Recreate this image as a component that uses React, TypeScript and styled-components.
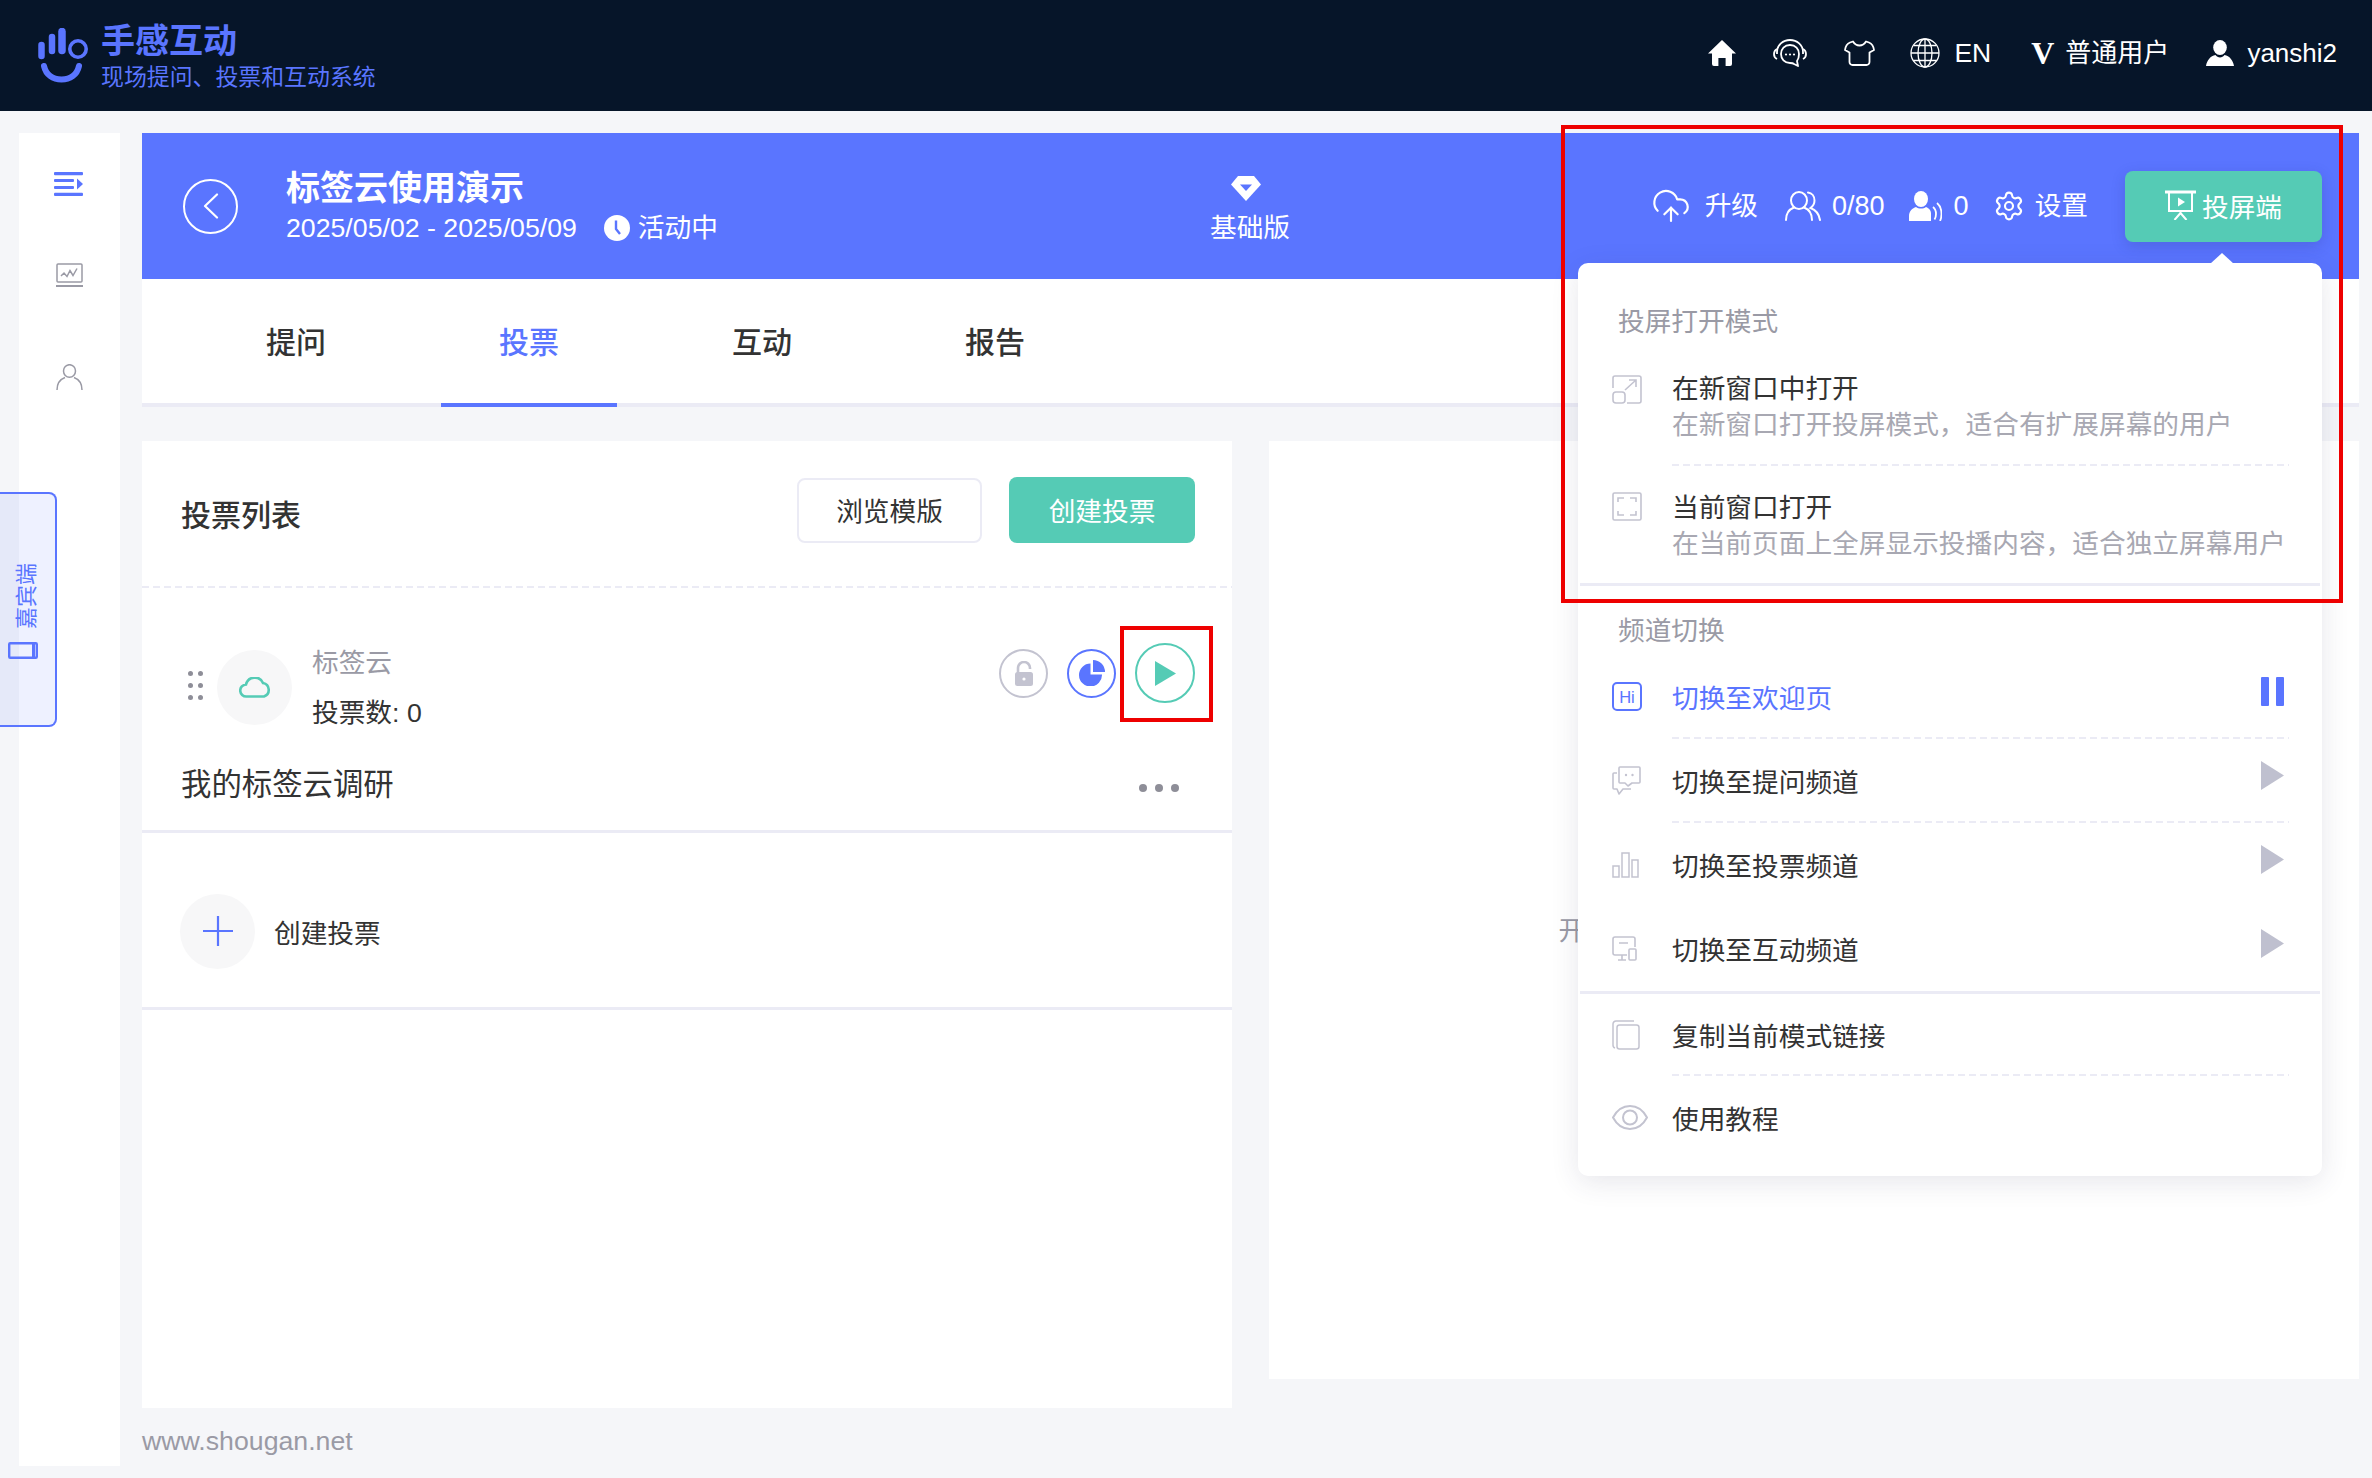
import React from "react";
import styled, { createGlobalStyle, css } from "styled-components";
import { CloudUpload, Settings } from "lucide-react";

const BLUE = "#5a75ff";
const TEAL = "#55cbb5";
const LINE = "#ebebf5";
const MUTED = "#9a9aa5";
const ICON = "#c3c3d0";
const INK = "#333333";
const FONT = `"Liberation Sans", "Noto Sans CJK SC", sans-serif`;
const BODY_SIZE = "26.7px";

const dashedBottom = css`
  background-image: linear-gradient(to right, ${LINE} 7px, transparent 7px);
  background-size: 11px 2px;
  background-position: left bottom;
  background-repeat: repeat-x;
`;

const Global = createGlobalStyle`
  html, body { margin: 0; padding: 0; background: #f5f6f9; }
  body { font-family: ${FONT}; color: ${INK}; }
  * { box-sizing: border-box; }
`;

const Page = styled.div`
  position: relative;
  width: 2372px;
  height: 1478px;
  overflow: hidden;
  background: #f5f6f9;
  display: flex;
  flex-direction: column;
`;

/* top bar */
const TopBar = styled.header`
  height: 111px;
  flex: none;
  background: #061529;
  display: flex;
  align-items: center;
  justify-content: space-between;
  padding: 0 35px 0 38px;
  color: #fff;
`;
const Brand = styled.div`
  display: flex;
  align-items: center;
  gap: 13px;
  color: ${BLUE};
`;
const BrandText = styled.div`
  display: flex;
  flex-direction: column;
  margin-top: -1px;
`;
const BrandName = styled.div`
  font-size: 34px;
  line-height: 44px;
  font-weight: 700;
`;
const BrandSub = styled.div`
  font-size: 22.9px;
  line-height: 29px;
`;
const TopNav = styled.nav`
  display: flex;
  align-items: center;
  gap: 37px;
  margin-top: -5px;
`;
const TopItem = styled.div<{ $gap?: number; $ml?: number; $size?: number }>`
  display: flex;
  align-items: center;
  gap: ${(p) => p.$gap ?? 14}px;
  font-size: ${(p) => p.$size ?? 26}px;
  line-height: 36px;
  margin-left: ${(p) => p.$ml ?? 0}px;
`;
const VMark = styled.span`
  font-family: "Liberation Serif", serif;
  font-weight: 700;
  font-size: 32px;
  line-height: 36px;
`;

/* shell */
const Shell = styled.div`
  flex: 1;
  min-height: 0;
  display: flex;
  gap: 22px;
  padding: 22px 13px 0 19px;
`;
const Rail = styled.aside`
  flex: none;
  width: 101px;
  height: 1333px;
  background: #fff;
  display: flex;
  flex-direction: column;
  align-items: center;
  padding: 39px 0 0 0;
`;
const RailSlot = styled.div<{ $gap: number; $nudge?: number }>`
  display: flex;
  margin-bottom: ${(p) => p.$gap}px;
  margin-right: ${(p) => p.$nudge ?? 0}px;
`;
const Content = styled.main`
  flex: 1;
  min-width: 0;
  display: flex;
  flex-direction: column;
`;

/* banner */
const Banner = styled.section`
  flex: none;
  height: 146px;
  background: ${BLUE};
  color: #fff;
  display: flex;
  align-items: center;
  padding: 0 37px 0 41px;
`;
const BannerSide = styled.div<{ $end?: boolean }>`
  flex: 1 1 0;
  display: flex;
  align-items: center;
  justify-content: ${(p) => (p.$end ? "flex-end" : "flex-start")};
  gap: ${(p) => (p.$end ? 24 : 48)}px;
`;
const BackButton = styled.div`
  width: 55px;
  height: 55px;
  flex: none;
  border: 2.5px solid #fff;
  border-radius: 50%;
  display: flex;
  align-items: center;
  justify-content: center;
`;
const EventInfo = styled.div`
  display: flex;
  flex-direction: column;
  margin-top: -2px;
`;
const EventTitle = styled.h1`
  margin: 0;
  font-size: 34px;
  line-height: 46px;
  font-weight: 700;
`;
const EventMeta = styled.div`
  display: flex;
  align-items: center;
  font-size: ${BODY_SIZE};
  line-height: 34px;
`;
const EventDates = styled.span`
  margin-right: 27px;
`;
const EventStatus = styled.span`
  display: flex;
  align-items: center;
  gap: 8px;
`;
const Plan = styled.div`
  flex: none;
  display: flex;
  flex-direction: column;
  align-items: center;
  gap: 10px;
  margin: 8px 5px 0 0;
  font-size: ${BODY_SIZE};
  line-height: 34px;
`;
const PlanMark = styled.span`
  display: flex;
  margin-right: 9px;
`;
const BannerAction = styled.div<{ $gap?: number; $size?: number; $after?: number }>`
  display: flex;
  align-items: center;
  gap: ${(p) => p.$gap ?? 11}px;
  font-size: ${(p) => p.$size ?? 26.7}px;
  line-height: 36px;
  margin-right: ${(p) => p.$after ?? 0}px;
`;
const ScreenWrap = styled.div`
  position: relative;
  margin-left: 13px;
`;
const ScreenButton = styled.div`
  width: 197px;
  height: 71px;
  background: ${TEAL};
  border-radius: 8px;
  box-shadow: 0 4px 14px rgba(40, 50, 130, 0.22);
  display: flex;
  align-items: center;
  justify-content: center;
  gap: 6px;
  font-size: ${BODY_SIZE};
  padding-bottom: 2px;
`;

/* popover */
const Popover = styled.div`
  position: absolute;
  z-index: 5;
  top: calc(100% + 21px);
  right: 0;
  width: 744px;
  height: 913px;
  background: #fff;
  border-radius: 10px;
  box-shadow: 0 6px 28px rgba(50, 50, 93, 0.12);
  color: ${INK};
  padding-top: 41px;
  &::before {
    content: "";
    position: absolute;
    top: -10px;
    right: 88px;
    width: 0;
    height: 0;
    border-left: 12px solid transparent;
    border-right: 12px solid transparent;
    border-bottom: 11px solid #fff;
  }
`;
const PopHeading = styled.div<{ $after: number }>`
  padding-left: 40px;
  font-size: ${BODY_SIZE};
  line-height: 36px;
  color: ${MUTED};
  margin-bottom: ${(p) => p.$after}px;
`;
const ModeRow = styled.div`
  display: flex;
  padding: 0 33px 0 34px;
`;
const IconCol = styled.div<{ $top?: number }>`
  flex: none;
  width: 60px;
  display: flex;
  align-items: ${(p) => (p.$top !== undefined ? "flex-start" : "center")};
  padding-top: ${(p) => p.$top ?? 0}px;
`;
const ModeBody = styled.div<{ $dashed?: boolean; $pt: number; $pb: number }>`
  flex: 1;
  padding: ${(p) => p.$pt}px 0 ${(p) => p.$pb}px;
  ${(p) => p.$dashed && dashedBottom}
`;
const ItemTitle = styled.div`
  font-size: ${BODY_SIZE};
  line-height: 36px;
`;
const ItemDesc = styled.div`
  font-size: ${BODY_SIZE};
  line-height: 36px;
  color: #a8a8b2;
  white-space: nowrap;
`;
const PopDivider = styled.div<{ $after: number }>`
  height: 3px;
  margin: 0 2px ${(p) => p.$after}px;
  background: ${LINE};
`;
const ChannelRow = styled.div<{ $h: number }>`
  height: ${(p) => p.$h}px;
  display: flex;
  padding: 0 33px 0 34px;
`;
const ChannelBody = styled.div<{ $dashed?: boolean; $active?: boolean }>`
  flex: 1;
  display: flex;
  align-items: center;
  justify-content: space-between;
  font-size: ${BODY_SIZE};
  color: ${(p) => (p.$active ? BLUE : INK)};
  padding-right: 5px;
  ${(p) => p.$dashed && dashedBottom}
`;
const StateMark = styled.span`
  display: flex;
  margin-bottom: 10px;
`;

/* tabs */
const Tabs = styled.nav`
  flex: none;
  height: 128px;
  background: #fff;
  border-bottom: 4px solid ${LINE};
  display: flex;
  gap: 57px;
  padding-left: 66px;
`;
const Tab = styled.div<{ $active?: boolean }>`
  width: 176px;
  height: 128px;
  display: flex;
  align-items: center;
  justify-content: center;
  font-size: 30px;
  font-weight: 500;
  padding-bottom: 2px;
  color: ${(p) => (p.$active ? BLUE : INK)};
  border-bottom: 4px solid ${(p) => (p.$active ? BLUE : "transparent")};
`;

/* panels */
const Panels = styled.div`
  flex: 1;
  display: flex;
  gap: 37px;
  margin-top: 34px;
  align-items: flex-start;
`;
const ListColumn = styled.div`
  flex: none;
  width: 1090px;
  display: flex;
  flex-direction: column;
`;
const ListPanel = styled.section`
  height: 967px;
  background: #fff;
`;
const ListHead = styled.div`
  height: 147px;
  display: flex;
  align-items: center;
  justify-content: space-between;
  padding: 0 37px 0 39px;
  ${dashedBottom}
`;
const ListTitle = styled.h2`
  margin: -3px 0 0;
  font-size: 30px;
  font-weight: 500;
`;
const ListActions = styled.div`
  display: flex;
  align-items: center;
  gap: 27px;
  margin-bottom: 9px;
`;
const HeadButton = styled.div<{ $primary?: boolean }>`
  width: ${(p) => (p.$primary ? 186 : 185)}px;
  height: ${(p) => (p.$primary ? 66 : 65)}px;
  display: flex;
  align-items: center;
  justify-content: center;
  font-size: ${BODY_SIZE};
  padding-bottom: 2px;
  border-radius: 8px;
  background: ${(p) => (p.$primary ? TEAL : "#fff")};
  color: ${(p) => (p.$primary ? "#fff" : INK)};
  border: ${(p) => (p.$primary ? "none" : `2px solid ${LINE}`)};
`;
const PollItem = styled.div`
  height: 245px;
  border-bottom: 3px solid ${LINE};
  padding: 0 0 0 39px;
  position: relative;
  display: flex;
  flex-direction: column;
`;
const PollTop = styled.div`
  display: flex;
  align-items: center;
  height: 136px;
  padding: 0 37px 0 0;
  margin-top: 31px;
`;
const GripDots = styled.div`
  display: grid;
  grid-template-columns: 5px 5px;
  gap: 7px 5px;
  margin: -4px 14px 0 7px;
  & > i {
    width: 5px;
    height: 5px;
    border-radius: 50%;
    background: #8e8e98;
  }
`;
const SoftCircle = styled.div`
  width: 75px;
  height: 75px;
  flex: none;
  border-radius: 50%;
  background: #f7f7f8;
  display: flex;
  align-items: center;
  justify-content: center;
`;
const PollMeta = styled.div`
  margin: 2px 0 0 20px;
  display: flex;
  flex-direction: column;
  gap: 14px;
  font-size: ${BODY_SIZE};
  line-height: 36px;
`;
const PollKind = styled.div`
  color: ${MUTED};
`;
const PollIcons = styled.div`
  margin: 0 0 28px auto;
  display: flex;
  align-items: center;
  gap: 19px;
`;
const RoundIcon = styled.div<{ $size: number; $color: string }>`
  width: ${(p) => p.$size}px;
  height: ${(p) => p.$size}px;
  border: 2px solid ${(p) => p.$color};
  border-radius: 50%;
  display: flex;
  align-items: center;
  justify-content: center;
`;
const PollBottom = styled.div`
  display: flex;
  align-items: center;
  justify-content: space-between;
  padding-right: 53px;
  margin-top: 8px;
  font-size: 30.4px;
  line-height: 42px;
`;
const MoreDots = styled.div`
  display: flex;
  gap: 8px;
  margin-top: 8px;
  & > i {
    width: 8px;
    height: 8px;
    border-radius: 50%;
    background: #8e8e98;
  }
`;
const CreateRow = styled.div`
  height: 177px;
  border-bottom: 3px solid ${LINE};
  padding: 22px 0 0 38px;
  display: flex;
  align-items: center;
  gap: 19px;
  font-size: ${BODY_SIZE};
`;
const Footer = styled.div`
  font-size: ${BODY_SIZE};
  line-height: 36px;
  margin-top: 15px;
  color: ${MUTED};
`;
const ResultPanel = styled.section`
  flex: 1;
  height: 938px;
  background: #fff;
  display: flex;
  align-items: center;
  justify-content: center;
  font-size: 26px;
  color: ${MUTED};
  overflow: hidden;
  white-space: nowrap;
  padding: 36px 0 0 9px;
`;

/* overlays */
const GuestTab = styled.div`
  position: absolute;
  left: 0;
  top: 492px;
  width: 57px;
  height: 235px;
  background: rgba(90, 117, 255, 0.1);
  border: 2px solid ${BLUE};
  border-left: none;
  border-radius: 0 8px 8px 0;
  display: flex;
  flex-direction: column;
  align-items: center;
  justify-content: center;
  gap: 12px;
  padding-top: 3px;
  color: ${BLUE};
`;
const GuestLabel = styled.span`
  writing-mode: vertical-rl;
  text-orientation: sideways;
  transform: rotate(180deg);
  font-size: 22px;
  line-height: 24px;
  margin-right: 2px;
`;
const GuestIconSlot = styled.span`
  display: flex;
  margin-right: 9px;
`;
const RedFrame = styled.div<{ $l: number; $t: number; $w: number; $h: number }>`
  position: absolute;
  z-index: 9;
  left: ${(p) => p.$l}px;
  top: ${(p) => p.$t}px;
  width: ${(p) => p.$w}px;
  height: ${(p) => p.$h}px;
  border: 4px solid #ee0000;
  pointer-events: none;
`;

const Glyph = styled.svg`
  display: block;
  flex: none;
`;

type IP = { c?: string };

const Logo = () => (
  <Glyph width="50" height="56" viewBox="0 0 50 56" fill="none" stroke={BLUE} strokeLinecap="round">
    <path d="M3.500 17v11" strokeWidth="6.500" />
    <path d="M14 9v14" strokeWidth="6.500" />
    <path d="M24 3.500v19" strokeWidth="7.500" />
    <circle cx="40" cy="21" r="8.200" strokeWidth="3.600" />
    <path d="M6 38c2 9 9 13.500 17.500 13.500S39 47 41 38" strokeWidth="6" />
  </Glyph>
);

const HomeIcon = () => (
  <Glyph width="28" height="26" viewBox="0 0 28 26" fill="#fff">
    <path d="M14 0 28 13.600h-4V24a2 2 0 0 1-2 2h-4.400v-8h-7.200v8H6a2 2 0 0 1-2-2V13.600H0z" />
  </Glyph>
);
const HeadsetIcon = () => (
  <Glyph width="34" height="28" viewBox="0 0 34 28" fill="none" stroke="#fff" strokeWidth="1.800" strokeLinejoin="round">
    <path d="M4 15v-2C4 6 10 1 17 1s13 5 13 12v2" />
    <path d="M4 10c-2 1-3 3-3 5s1 4 3 5M30 10c2 1 3 3 3 5s-1 4-3 5" />
    <path d="M17 6C11.500 6 8 10 8 15s3.500 9 9 9c1.500 0 3 0 4 1l4 2-1-5c1.500-2 2-4 2-7 0-5-3.500-9-9-9z" />
    <circle cx="13" cy="15.500" r="1.100" fill="#fff" stroke="none" />
    <circle cx="17" cy="15.500" r="1.100" fill="#fff" stroke="none" />
    <circle cx="21" cy="15.500" r="1.100" fill="#fff" stroke="none" />
  </Glyph>
);
const ShirtIcon = () => (
  <Glyph width="31" height="26" viewBox="0 0 31 26" fill="none" stroke="#fff" strokeWidth="1.800" strokeLinejoin="round">
    <path d="M9 1.500c1.500 2.500 4 4 6.500 4s5-1.500 6.500-4l3 1c2.500 1 4.500 3.500 5 7.500l-4.500 2.500V22a3 3 0 0 1-3 3h-14a3 3 0 0 1-3-3v-9.500L1 10c.5-4 2.500-6.500 5-7.500z" />
  </Glyph>
);
const GlobeIcon = () => (
  <Glyph width="30" height="30" viewBox="0 0 30 30" fill="none" stroke="#fff" strokeWidth="1.300">
    <circle cx="15" cy="15" r="14" />
    <ellipse cx="15" cy="15" rx="7" ry="14" />
    <path d="M15 1v28M1 15h28M3.500 7.500h23M3.500 22.500h23" />
  </Glyph>
);
const PersonSolid = () => (
  <Glyph width="28" height="26" viewBox="0 0 28 26" fill="#fff">
    <ellipse cx="14" cy="7.500" rx="6.800" ry="7.500" />
    <path d="M9.500 15c1 1.500 2.800 2.500 4.500 2.500s3.500-1 4.500-2.500c5 1 8.500 5 9.500 11H0c1-6 4.500-10 9.500-11z" />
  </Glyph>
);
const BackChevron = () => (
  <Glyph width="16" height="26" viewBox="0 0 16 26" fill="none" stroke="#fff" strokeWidth="2.200" strokeLinecap="round" strokeLinejoin="round">
    <path d="M14 1.500 2 13l12 11.500" />
  </Glyph>
);
const ClockIcon = () => (
  <Glyph width="26" height="26" viewBox="0 0 26 26">
    <circle cx="13" cy="13" r="13" fill="#fff" />
    <path d="M12 5.500V14l4 5" fill="none" stroke={BLUE} strokeWidth="2.400" strokeLinejoin="round" />
  </Glyph>
);
const DiamondIcon = () => (
  <Glyph width="30" height="25" viewBox="0 0 30 25" fill="#fff">
    <path d="M7 0h16l7 8.500L15 25 0 8.500z" />
    <path d="M9 8.500h12L15 15z" fill={BLUE} />
  </Glyph>
);
const UsersOutline = () => (
  <Glyph width="36" height="30" viewBox="0 0 36 30" fill="none" stroke="#fff" strokeWidth="2" strokeLinecap="round">
    <ellipse cx="14" cy="9.500" rx="8" ry="8.500" />
    <path d="M1 29c0-7 4-11 8-12.500M27 29c0-7-4-11-8-12.500" />
    <path d="M23 1.500c4 .5 6.500 4 6.500 8s-2 6-4 7.500c4 1.500 8.500 5 9.500 12" />
  </Glyph>
);
const PersonWave = () => (
  <Glyph width="33" height="30" viewBox="0 0 33 30" fill="#fff">
    <ellipse cx="12" cy="8" rx="7" ry="8" />
    <path d="M0 30v-5c0-5 3.500-8 7-9 1.500 1 3 1.500 5 1.500s3.500-.5 5-1.500c1.500.5 3 1.500 4 3 .5 1 1 2 1 3v8a1 1 0 0 1-1 0z" />
    <path d="M24 16c2 1.500 3 4 3 7 0 2-.5 4-1.500 5.500M28 12c3 2.500 4.500 6.500 4.500 11 0 2.500-.5 5-1.500 7" fill="none" stroke="#fff" strokeWidth="1.800" />
  </Glyph>
);
const PresentIcon = () => (
  <Glyph width="31" height="30" viewBox="0 0 31 30" fill="none" stroke="#fff" strokeWidth="2">
    <path d="M0 2h31" strokeWidth="3" />
    <path d="M4 2v19h23V2" />
    <path d="M13 7.500v9l7-4.500z" fill="#fff" stroke="none" />
    <path d="M15.500 21v3M15.500 23l-6 7M15.500 23l6 7" />
  </Glyph>
);

const MenuIcon = () => (
  <Glyph width="29" height="24" viewBox="0 0 29 24" fill={BLUE}>
    <rect y="0" width="29" height="3.200" rx="1" />
    <rect y="7" width="20" height="3" rx="1" />
    <rect y="14" width="20" height="3" rx="1" />
    <rect y="20.800" width="29" height="3.200" rx="1" />
    <path d="M23 6.500 29 12l-6 5.500z" />
  </Glyph>
);
const ChartPad = () => (
  <Glyph width="27" height="24" viewBox="0 0 27 24" fill="none" stroke={MUTED} strokeWidth="1.500">
    <rect x="1" y="1" width="25" height="18" rx="1" />
    <path d="M5 13l3-3 3 3.500 3-6 3 5 4-7" />
    <path d="M0 23h27" strokeWidth="2" />
  </Glyph>
);
const PersonOutline = () => (
  <Glyph width="27" height="26" viewBox="0 0 27 26" fill="none" stroke={MUTED} strokeWidth="1.500">
    <ellipse cx="13.500" cy="7" rx="6" ry="6.300" />
    <path d="M1 26c0-7 4-11 8-12.500M26 26c0-7-4-11-8-12.500" />
  </Glyph>
);
const TabletIcon = () => (
  <Glyph width="30" height="17" viewBox="0 0 30 17" fill="none" stroke={BLUE} strokeWidth="2.400">
    <rect x="1.200" y="1.200" width="27.600" height="14.600" rx="1" />
    <path d="M25.500 1v15" strokeWidth="3" />
  </Glyph>
);

const CloudOutline = () => (
  <Glyph width="32" height="21" viewBox="0 0 32 21" fill="none" stroke={TEAL} strokeWidth="2.600">
    <path d="M9 19.500H7.500a6 6 0 0 1-.5-12 9 9 0 0 1 17-1.500 7 7 0 0 1 1 13.500z" />
  </Glyph>
);
const PlusIcon = () => (
  <Glyph width="30" height="30" viewBox="0 0 30 30" fill="none" stroke={BLUE} strokeWidth="2.200">
    <path d="M15 0v30M0 15h30" />
  </Glyph>
);
const LockIcon = () => (
  <Glyph width="20" height="25" viewBox="0 0 20 25">
    <path d="M4 12V7a6 6 0 0 1 12 0v1" fill="none" stroke={ICON} strokeWidth="2.600" />
    <rect x="1" y="11" width="18" height="14" rx="2.500" fill={ICON} />
    <circle cx="10" cy="18" r="1.600" fill="#fff" />
  </Glyph>
);
const PieIcon = () => (
  <Glyph width="26" height="26" viewBox="0 0 26 26" fill={BLUE}>
    <path d="M11.500 3.500V14.500H23A11.500 11.500 0 1 1 11.500 3.500z" />
    <path d="M14 0a12 12 0 0 1 12 12H14z" />
  </Glyph>
);
const PlayIcon = () => (
  <Glyph width="21" height="25" viewBox="0 0 21 25" fill={TEAL}>
    <path d="M0 0 21 12.500 0 25z" />
  </Glyph>
);

const OpenNew = ({ c = ICON }: IP) => (
  <Glyph width="30" height="29" viewBox="0 0 30 29" fill="none" stroke={c} strokeWidth="1.600">
    <path d="M1 13V3a2 2 0 0 1 2-2h24a2 2 0 0 1 2 2v23a2 2 0 0 1-2 2H15" />
    <rect x="1" y="17" width="12" height="11" rx="3" />
    <path d="M13 15 24 5M17 5h7v7" />
  </Glyph>
);
const FullIcon = ({ c = ICON }: IP) => (
  <Glyph width="30" height="29" viewBox="0 0 30 29" fill="none" stroke={c} strokeWidth="1.600">
    <rect x="1" y="1" width="28" height="27" rx="1.500" />
    <path d="M6 10V6h6M18 6h6v4M6 19v4h6M18 23h6v-4" />
  </Glyph>
);
const HiIcon = () => (
  <Glyph width="30" height="29" viewBox="0 0 30 29" fill="none" stroke={BLUE} strokeWidth="2">
    <rect x="1" y="1" width="28" height="27" rx="4" />
    <text x="15" y="20.500" textAnchor="middle" fontFamily="Liberation Sans, sans-serif" fontSize="16.500" fill={BLUE} stroke="none">
      Hi
    </text>
  </Glyph>
);
const ChatIcon = ({ c = ICON }: IP) => (
  <Glyph width="29" height="29" viewBox="0 0 29 29" fill="none" stroke={c} strokeWidth="1.600" strokeLinejoin="round">
    <path d="M8 1h19a1 1 0 0 1 1 1v14a1 1 0 0 1-1 1h-7l-4 3-3-3H8a1 1 0 0 1-1-1V2a1 1 0 0 1 1-1z" />
    <path d="M5 7H2a1 1 0 0 0-1 1v14a1 1 0 0 0 1 1h3l2 5 4-5h8" />
    <circle cx="14" cy="9" r="1.200" fill={c} stroke="none" />
    <circle cx="20.500" cy="9" r="1.200" fill={c} stroke="none" />
  </Glyph>
);
const BarsIcon = ({ c = ICON }: IP) => (
  <Glyph width="27" height="26" viewBox="0 0 27 26" fill="none" stroke={c} strokeWidth="1.500">
    <rect x="1" y="14" width="6" height="11" />
    <rect x="10" y="1" width="7" height="24" />
    <rect x="20" y="8" width="6" height="17" />
  </Glyph>
);
const DeviceIcon = ({ c = ICON }: IP) => (
  <Glyph width="25" height="25" viewBox="0 0 25 25" fill="none" stroke={c} strokeWidth="1.600">
    <path d="M15 19H3a2 2 0 0 1-2-2V3a2 2 0 0 1 2-2h18a2 2 0 0 1 2 2v8" />
    <path d="M7 7h9M6 24h8M10 19v5" />
    <rect x="17" y="13" width="7" height="11" rx="1" />
  </Glyph>
);
const CopyIcon = ({ c = ICON }: IP) => (
  <Glyph width="28" height="30" viewBox="0 0 28 30" fill="none" stroke={c} strokeWidth="1.500">
    <path d="M22 1H4a3 3 0 0 0-3 3v21a3 3 0 0 0 2 3" />
    <rect x="5" y="5" width="22" height="24" rx="2.500" />
  </Glyph>
);
const EyeIcon = ({ c = ICON }: IP) => (
  <Glyph width="36" height="25" viewBox="0 0 36 25" fill="none" stroke={c} strokeWidth="2">
    <path d="M1 12.500C5 5 11 1 18 1s13 4 17 11.500C31 20 25 24 18 24S5 20 1 12.500z" />
    <ellipse cx="18" cy="12.500" rx="7" ry="7" />
  </Glyph>
);
const PauseMark = () => (
  <Glyph width="23" height="29" viewBox="0 0 23 29" fill={BLUE}>
    <rect width="8" height="29" rx="1" />
    <rect x="15" width="8" height="29" rx="1" />
  </Glyph>
);
const PlayMark = () => (
  <Glyph width="23" height="29" viewBox="0 0 23 29" fill="#bfc0cf">
    <path d="M0 0 23 14.500 0 29z" />
  </Glyph>
);

const channels = [
  { label: "切换至欢迎页", icon: <HiIcon />, active: true, dashed: true },
  { label: "切换至提问频道", icon: <ChatIcon />, dashed: true },
  { label: "切换至投票频道", icon: <BarsIcon /> },
  { label: "切换至互动频道", icon: <DeviceIcon /> },
];

export default function App() {
  return (
    <Page>
      <Global />
      <TopBar>
        <Brand>
          <Logo />
          <BrandText>
            <BrandName>手感互动</BrandName>
            <BrandSub>现场提问、投票和互动系统</BrandSub>
          </BrandText>
        </Brand>
        <TopNav>
          <HomeIcon />
          <HeadsetIcon />
          <ShirtIcon />
          <TopItem $ml={-2} $size={26.500}>
            <GlobeIcon />
            <span>EN</span>
          </TopItem>
          <TopItem $gap={11} $ml={3}>
            <VMark>V</VMark>
            <span>普通用户</span>
          </TopItem>
          <TopItem $gap={13}>
            <PersonSolid />
            <span>yanshi2</span>
          </TopItem>
        </TopNav>
      </TopBar>

      <Shell>
        <Rail>
          <RailSlot $gap={67} $nudge={3}>
            <MenuIcon />
          </RailSlot>
          <RailSlot $gap={77}>
            <ChartPad />
          </RailSlot>
          <RailSlot $gap={0}>
            <PersonOutline />
          </RailSlot>
        </Rail>

        <Content>
          <Banner>
            <BannerSide>
              <BackButton>
                <BackChevron />
              </BackButton>
              <EventInfo>
                <EventTitle>标签云使用演示</EventTitle>
                <EventMeta>
                  <EventDates>2025/05/02 - 2025/05/09</EventDates>
                  <EventStatus>
                    <ClockIcon />
                    活动中
                  </EventStatus>
                </EventMeta>
              </EventInfo>
            </BannerSide>
            <Plan>
              <PlanMark>
                <DiamondIcon />
              </PlanMark>
              基础版
            </Plan>
            <BannerSide $end>
              <BannerAction $gap={14} $after={3}>
                <CloudUpload size={40} strokeWidth={1.3} color="#fff" />
                升级
              </BannerAction>
              <BannerAction $size={27}>
                <UsersOutline />
                0/80
              </BannerAction>
              <BannerAction $gap={12} $size={27}>
                <PersonWave />0
              </BannerAction>
              <BannerAction $gap={10}>
                <Settings size={32} strokeWidth={1.6} color="#fff" />
                设置
              </BannerAction>
              <ScreenWrap>
                <ScreenButton>
                  <PresentIcon />
                  投屏端
                </ScreenButton>
                <Popover>
                  <PopHeading $after={9}>投屏打开模式</PopHeading>
                  <ModeRow>
                    <IconCol $top={26}>
                      <OpenNew />
                    </IconCol>
                    <ModeBody $dashed $pt={22} $pb={23}>
                      <ItemTitle>在新窗口中打开</ItemTitle>
                      <ItemDesc>在新窗口打开投屏模式，适合有扩展屏幕的用户</ItemDesc>
                    </ModeBody>
                  </ModeRow>
                  <ModeRow>
                    <IconCol $top={26}>
                      <FullIcon />
                    </IconCol>
                    <ModeBody $pt={24} $pb={21}>
                      <ItemTitle>当前窗口打开</ItemTitle>
                      <ItemDesc>在当前页面上全屏显示投播内容，适合独立屏幕用户</ItemDesc>
                    </ModeBody>
                  </ModeRow>
                  <PopDivider $after={27} />
                  <PopHeading $after={6}>频道切换</PopHeading>
                  {channels.map((ch) => (
                    <ChannelRow $h={84} key={ch.label}>
                      <IconCol>{ch.icon}</IconCol>
                      <ChannelBody $dashed={ch.dashed} $active={ch.active}>
                        {ch.label}
                        <StateMark>{ch.active ? <PauseMark /> : <PlayMark />}</StateMark>
                      </ChannelBody>
                    </ChannelRow>
                  ))}
                  <PopDivider $after={0} />
                  <ChannelRow $h={82}>
                    <IconCol>
                      <CopyIcon />
                    </IconCol>
                    <ChannelBody $dashed>复制当前模式链接</ChannelBody>
                  </ChannelRow>
                  <ChannelRow $h={84}>
                    <IconCol>
                      <EyeIcon />
                    </IconCol>
                    <ChannelBody>使用教程</ChannelBody>
                  </ChannelRow>
                </Popover>
              </ScreenWrap>
            </BannerSide>
          </Banner>

          <Tabs>
            <Tab>提问</Tab>
            <Tab $active>投票</Tab>
            <Tab>互动</Tab>
            <Tab>报告</Tab>
          </Tabs>

          <Panels>
            <ListColumn>
              <ListPanel>
                <ListHead>
                  <ListTitle>投票列表</ListTitle>
                  <ListActions>
                    <HeadButton>浏览模版</HeadButton>
                    <HeadButton $primary>创建投票</HeadButton>
                  </ListActions>
                </ListHead>
                <PollItem>
                  <PollTop>
                    <GripDots>
                      <i />
                      <i />
                      <i />
                      <i />
                      <i />
                      <i />
                    </GripDots>
                    <SoftCircle>
                      <CloudOutline />
                    </SoftCircle>
                    <PollMeta>
                      <PollKind>标签云</PollKind>
                      <div>投票数: 0</div>
                    </PollMeta>
                    <PollIcons>
                      <RoundIcon $size={49} $color={ICON}>
                        <LockIcon />
                      </RoundIcon>
                      <RoundIcon $size={49} $color={BLUE}>
                        <PieIcon />
                      </RoundIcon>
                      <RoundIcon $size={60} $color={TEAL}>
                        <PlayIcon />
                      </RoundIcon>
                    </PollIcons>
                  </PollTop>
                  <PollBottom>
                    我的标签云调研
                    <MoreDots>
                      <i />
                      <i />
                      <i />
                    </MoreDots>
                  </PollBottom>
                </PollItem>
                <CreateRow>
                  <SoftCircle>
                    <PlusIcon />
                  </SoftCircle>
                  创建投票
                </CreateRow>
              </ListPanel>
              <Footer>www.shougan.net</Footer>
            </ListColumn>
            <ResultPanel>开始投票后，这里会实时显示投票的结果数据</ResultPanel>
          </Panels>
        </Content>
      </Shell>

      <GuestTab>
        <GuestLabel>嘉宾端</GuestLabel>
        <GuestIconSlot>
          <TabletIcon />
        </GuestIconSlot>
      </GuestTab>
      <RedFrame $l={1561} $t={125} $w={782} $h={478} />
      <RedFrame $l={1120} $t={626} $w={93} $h={96} />
    </Page>
  );
}
